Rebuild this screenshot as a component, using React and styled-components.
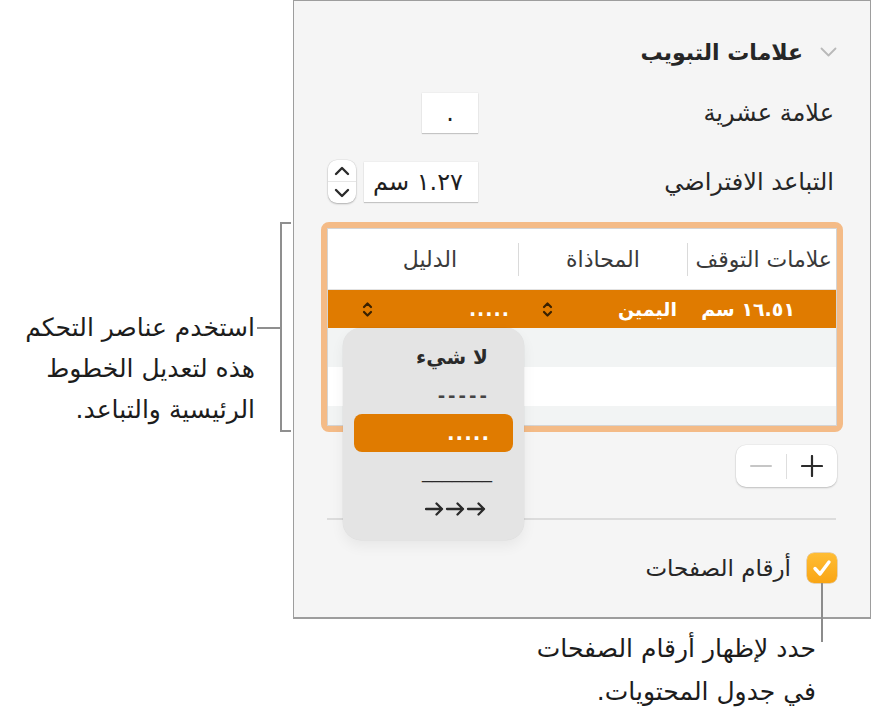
import React from "react";
import styled, { createGlobalStyle } from "styled-components";

const GlobalStyle = createGlobalStyle`
  html, body {
    margin: 0;
    padding: 0;
    background: #ffffff;
  }
  body {
    font-family: "DejaVu Sans", "Noto Sans", sans-serif;
    color: #222;
  }
`;

const Page = styled.div`
  width: 873px;
  height: 716px;
  display: grid;
  grid-template-columns: 293px 578px;
  grid-template-rows: 619px 1fr;
  overflow: hidden;
`;

/* ---------- left callout ---------- */

const SideNote = styled.div`
  grid-column: 1;
  grid-row: 1;
  display: flex;
  justify-content: flex-end;
  align-items: flex-start;
  padding-top: 222px;
  padding-right: 2px;
`;

const NoteText = styled.p`
  margin: ${(p) => p.$top || 0}px 0 0;
  direction: rtl;
  text-align: right;
  font-size: 25px;
  line-height: ${(p) => p.$lh || 41}px;
  color: #1c1c1c;
  white-space: nowrap;
`;

const Tick = styled.span`
  flex: none;
  width: 23px;
  height: 2px;
  margin-top: 105px;
  margin-left: 2px;
  background: #8f8f8f;
`;

const Bracket = styled.span`
  flex: none;
  width: 9px;
  height: 206px;
  border: 2px solid #8f8f8f;
  border-right: none;
`;

/* ---------- panel ---------- */

const Panel = styled.section`
  grid-column: 2;
  grid-row: 1;
  box-sizing: border-box;
  background: #f5f5f5;
  border: 1px solid #9d9d9d;
  border-bottom-width: 2px;
  padding: 0 27px;
  direction: rtl;
  display: flex;
  flex-direction: column;
`;

const HeadRow = styled.div`
  margin-top: 39px;
  height: 24px;
  display: flex;
  align-items: center;
  gap: 17px;
  padding-right: 6px;
`;

const Title = styled.h2`
  margin: 0;
  font-size: 22px;
  font-weight: 700;
  color: #262626;
`;

const FieldRow = styled.div`
  margin-top: ${(p) => p.$gap}px;
  height: ${(p) => p.$h || 40}px;
  display: flex;
  align-items: center;
  padding-right: 9px;
`;

const Label = styled.span`
  flex: 0 0 356px;
  font-size: 24px;
  color: #262626;
`;

const InputBox = styled.div`
  box-sizing: border-box;
  width: ${(p) => p.$w}px;
  height: 40px;
  background: #fff;
  box-shadow: 0 1px 1px rgba(0, 0, 0, 0.18), 0 0 0 0.5px rgba(0, 0, 0, 0.05);
  display: flex;
  align-items: center;
  justify-content: ${(p) => (p.$center ? "center" : "flex-start")};
  padding-right: ${(p) => (p.$center ? 0 : 15)}px;
  font-size: 24px;
  color: #1e1e1e;
`;

const Stepper = styled.div`
  margin-right: 8px;
  width: 28px;
  height: 43px;
  border-radius: 9px;
  background: #fff;
  box-shadow: 0 1px 2px rgba(0, 0, 0, 0.25), 0 0 0 0.5px rgba(0, 0, 0, 0.08);
  display: flex;
  flex-direction: column;
  align-items: center;
  justify-content: center;
`;

const StepHalf = styled.div`
  height: 21px;
  width: 100%;
  display: flex;
  align-items: center;
  justify-content: center;
  border-top: ${(p) => (p.$lower ? "1px solid #e6e6e6" : "none")};
`;

/* ---------- table ---------- */

const TableRing = styled.div`
  position: relative;
  margin-top: 19px;
  box-sizing: border-box;
  height: 210px;
  border: 6px solid #f4bb87;
  border-radius: 8px;
`;

const Table = styled.div`
  box-sizing: border-box;
  height: 100%;
  border: 1px solid #d4d4d4;
  background: #fff;
  overflow: hidden;
`;

const HeaderRow = styled.div`
  height: 60px;
  border-bottom: 1px solid #e2e2e2;
  display: grid;
  grid-template-columns: 148px 1px 168px 1px 1fr;
  align-items: center;
`;

const HeadCell = styled.div`
  font-size: 22px;
  color: #3a3a3a;
  text-align: ${(p) => (p.$start ? "right" : "center")};
  padding-right: ${(p) => p.$pr || 0}px;
  padding-left: ${(p) => p.$pl || 0}px;
  white-space: nowrap;
`;

const ColSep = styled.span`
  height: 33px;
  background: #dadada;
`;

const BodyRow = styled.div`
  height: ${(p) => p.$h || 39}px;
  display: grid;
  grid-template-columns: 149px 169px 1fr;
  align-items: center;
  background: ${(p) =>
    p.$selected ? "#e07b00" : p.$alt ? "#f2f4f4" : "#ffffff"};
  color: #fff;
`;

const Cell = styled.div`
  display: flex;
  align-items: center;
  justify-content: space-between;
  padding-right: ${(p) => p.$pr || 0}px;
  padding-left: ${(p) => p.$pl || 0}px;
  font-size: 19px;
  font-weight: 700;
  white-space: nowrap;
`;

const Dots = styled.span`
  font-weight: 700;
  letter-spacing: 1px;
`;

/* ---------- popup menu ---------- */

const Menu = styled.div`
  position: absolute;
  left: 16px;
  top: 100px;
  z-index: 2;
  box-sizing: border-box;
  width: 181px;
  height: 212px;
  padding: 10px 11px 12px;
  border-radius: 18px;
  background: #e4e4e4;
  box-shadow: 0 0 0 0.5px rgba(0, 0, 0, 0.06), 0 6px 14px rgba(0, 0, 0, 0.06);
  display: flex;
  flex-direction: column;
`;

const MenuItem = styled.div`
  height: 38px;
  border-radius: 8px;
  display: flex;
  align-items: center;
  padding-right: ${(p) => p.$pr || 23}px;
  background: ${(p) => (p.$active ? "#e07b00" : "transparent")};
  color: ${(p) => (p.$active ? "#fff" : p.$muted ? "#444" : "#2a2a2a")};
  font-family: ${(p) => (p.$sym ? '"DejaVu Sans", sans-serif' : "inherit")};
  font-size: ${(p) => p.$size || 20}px;
  font-weight: ${(p) => p.$weight || 400};
  letter-spacing: ${(p) => p.$ls || 0}px;
  white-space: nowrap;
`;

/* ---------- lower controls ---------- */

const ButtonRow = styled.div`
  margin-top: 13px;
  display: flex;
  padding-right: 6px;
`;

const Segmented = styled.div`
  width: 101px;
  height: 42px;
  border-radius: 10px;
  background: #fff;
  box-shadow: 0 1px 2px rgba(0, 0, 0, 0.2), 0 0 0 0.5px rgba(0, 0, 0, 0.06);
  display: flex;
  align-items: center;
`;

const SegButton = styled.div`
  flex: 1;
  height: 100%;
  display: flex;
  align-items: center;
  justify-content: center;
`;

const SegDivider = styled.span`
  width: 1px;
  height: 25px;
  background: #dedede;
`;

const Divider = styled.hr`
  margin: 31px 7px 0 6px;
  border: none;
  height: 2px;
  background: #dcdcdc;
`;

const CheckRow = styled.label`
  margin-top: 33px;
  display: flex;
  align-items: center;
  gap: 16px;
  padding-right: 6px;
`;

const CheckBox = styled.span`
  position: relative;
  width: 30px;
  height: 30px;
  border-radius: 7px;
  background: linear-gradient(#ffbd34, #f9a514);
  box-shadow: 0 0 0 0.5px rgba(180, 110, 0, 0.5);
  display: flex;
  align-items: center;
  justify-content: center;

  &::after {
    content: "";
    position: absolute;
    left: 14px;
    top: 100%;
    width: 2px;
    height: 59px;
    background: #8c8c8c;
  }
`;

const CheckLabel = styled.span`
  font-size: 23px;
  color: #262626;
`;

/* ---------- bottom callout ---------- */

const BottomNote = styled.div`
  grid-column: 1 / span 2;
  grid-row: 2;
  display: flex;
  justify-content: flex-end;
  padding-right: 55px;
  padding-top: 8px;
`;

/* ---------- icons ---------- */

const Chevron = () => (
  <svg width="17" height="10" viewBox="0 0 17 10">
    <path d="M1.5 1.5 L8.5 8.5 L15.5 1.5" fill="none" stroke="#b9b9b9" strokeWidth="1.8" strokeLinecap="round" strokeLinejoin="round" />
  </svg>
);

const UpDown = ({ color = "#3a2100" }) => (
  <svg width="11" height="17" viewBox="0 0 11 17">
    <path d="M2 6 L5.5 2.5 L9 6" fill="none" stroke={color} strokeWidth="2.2" strokeLinecap="round" strokeLinejoin="round" />
    <path d="M2 11 L5.5 14.5 L9 11" fill="none" stroke={color} strokeWidth="2.2" strokeLinecap="round" strokeLinejoin="round" />
  </svg>
);

const Caret = ({ down }) => (
  <svg width="16" height="10" viewBox="0 0 16 10">
    <path
      d={down ? "M2 2 L8 8 L14 2" : "M2 8 L8 2 L14 8"}
      fill="none"
      stroke="#2b2b2b"
      strokeWidth="2.4"
      strokeLinecap="round"
      strokeLinejoin="round"
    />
  </svg>
);

const ArrowLeader = () => (
  <svg width="61" height="14" viewBox="0 0 61 14">
    {[0, 21, 42].map((x) => (
      <path
        key={x}
        d={`M${x + 1} 7 H${x + 17} M${x + 11.5} 1.5 L${x + 17} 7 L${x + 11.5} 12.5`}
        fill="none"
        stroke="#2a2a2a"
        strokeWidth="2.3"
        strokeLinecap="round"
        strokeLinejoin="round"
      />
    ))}
  </svg>
);

const Plus = () => (
  <svg width="22" height="22" viewBox="0 0 22 22">
    <path d="M11 1 V21 M1 11 H21" stroke="#2b2b2b" strokeWidth="2.2" strokeLinecap="round" />
  </svg>
);

const Minus = () => (
  <svg width="22" height="22" viewBox="0 0 22 22">
    <path d="M1 11 H21" stroke="#c6c6c6" strokeWidth="2" strokeLinecap="round" />
  </svg>
);

const Check = () => (
  <svg width="20" height="18" viewBox="0 0 20 18">
    <path d="M3 9.5 L8 15 L17 3" fill="none" stroke="#fff" strokeWidth="3.4" strokeLinecap="round" strokeLinejoin="round" />
  </svg>
);

export default function App() {
  return (
    <Page>
      <GlobalStyle />

      <SideNote>
        <NoteText $top={85}>
          استخدم عناصر التحكم
          <br />
          هذه لتعديل الخطوط
          <br />
          الرئيسية والتباعد.
        </NoteText>
        <Tick />
        <Bracket />
      </SideNote>

      <Panel>
        <HeadRow>
          <Chevron />
          <Title>علامات التبويب</Title>
        </HeadRow>

        <FieldRow $gap={29}>
          <Label>علامة عشرية</Label>
          <InputBox $w={56} $center>
            .
          </InputBox>
        </FieldRow>

        <FieldRow $gap={27} $h={43}>
          <Label>التباعد الافتراضي</Label>
          <InputBox $w={114}>١.٢٧ سم</InputBox>
          <Stepper>
            <StepHalf>
              <Caret />
            </StepHalf>
            <StepHalf $lower>
              <Caret down />
            </StepHalf>
          </Stepper>
        </FieldRow>

        <TableRing>
          <Table>
            <HeaderRow>
              <HeadCell $start $pr={4}>
                علامات التوقف
              </HeadCell>
              <ColSep />
              <HeadCell>المحاذاة</HeadCell>
              <ColSep />
              <HeadCell $pl={14}>الدليل</HeadCell>
            </HeaderRow>
            <BodyRow $selected $h={38}>
              <Cell $pr={41}>١٦.٥١ سم</Cell>
              <Cell $pr={10} $pl={24}>
                اليمين
                <UpDown />
              </Cell>
              <Cell $pr={8} $pl={34}>
                <Dots>.....</Dots>
                <UpDown />
              </Cell>
            </BodyRow>
            <BodyRow $alt />
            <BodyRow />
            <BodyRow $alt />
          </Table>

          <Menu>
            <MenuItem $weight={600} $pr={25}>
              لا شيء
            </MenuItem>
            <MenuItem $sym $muted $weight={700} $ls={3} $size={18}>
              -----
            </MenuItem>
            <MenuItem $active $weight={700} $ls={1}>
              .....
            </MenuItem>
            <MenuItem $sym $size={20} $pr={21}>
              _______
            </MenuItem>
            <MenuItem $pr={27}>
              <ArrowLeader />
            </MenuItem>
          </Menu>
        </TableRing>

        <ButtonRow>
          <Segmented>
            <SegButton>
              <Plus />
            </SegButton>
            <SegDivider />
            <SegButton>
              <Minus />
            </SegButton>
          </Segmented>
        </ButtonRow>

        <Divider />

        <CheckRow>
          <CheckBox>
            <Check />
          </CheckBox>
          <CheckLabel>أرقام الصفحات</CheckLabel>
        </CheckRow>
      </Panel>

      <BottomNote>
        <NoteText $lh={43}>
          حدد لإظهار أرقام الصفحات
          <br />
          في جدول المحتويات.
        </NoteText>
      </BottomNote>
    </Page>
  );
}
